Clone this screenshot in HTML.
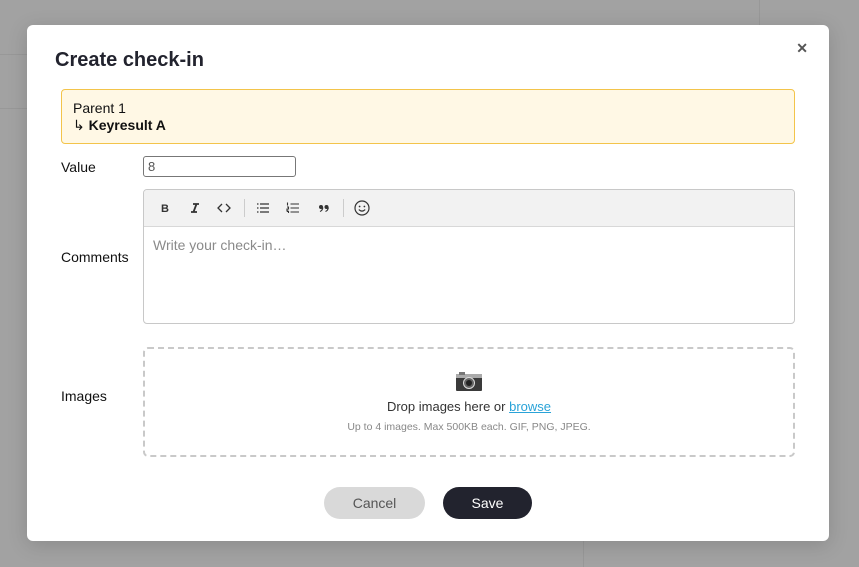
<!DOCTYPE html>
<html><head><style>
*{box-sizing:border-box;margin:0;padding:0}
body{width:859px;height:567px;background:#a2a2a2;font-family:"Liberation Sans",sans-serif;position:relative;overflow:hidden;color:#111}
.ln{position:absolute;background:#989898}
.modal{position:absolute;left:27px;top:25px;width:802px;height:516px;background:#fff;border-radius:6px;box-shadow:0 4px 20px rgba(0,0,0,.15)}
h1{position:absolute;left:28px;top:24px;font-size:20px;font-weight:bold;color:#22232e}
.x{position:absolute;right:21px;top:15px;font-size:14px;color:#555;font-weight:bold}
.crumb{position:absolute;left:34px;top:64px;width:734px;height:55px;background:#fff8e5;border:1px solid #f3c44a;border-radius:4px;padding:10px 11px;font-size:14px;line-height:17px}
.lab{position:absolute;left:34px;font-size:14px}
.val{position:absolute;left:116px;top:131px;width:153px;height:21px;border:1px solid #777;border-radius:3px;font-size:13px;padding:2px 4px;color:#555}
.ed{position:absolute;left:116px;top:164px;width:652px;height:135px;border:1px solid #c8c8c8;border-radius:4px;overflow:hidden}
.tb{height:37px;background:#f2f2f2;border-bottom:1px solid #d8d8d8;position:relative;font-size:12px;color:#333}
.tb svg{position:absolute;top:11px}
.sep{position:absolute;top:9px;width:1px;height:18px;background:#ccc}
.ph{padding:10px 9px;font-size:14px;color:#8a8a8a}
.drop{position:absolute;left:116px;top:322px;width:652px;height:110px;border:2px dashed #c9c9c9;border-radius:5px;text-align:center}
.btn{position:absolute;top:462px;height:32px;border-radius:16px;font-size:14px;line-height:32px;text-align:center}
</style></head><body>
<div class="ln" style="left:0;top:54px;width:27px;height:1px"></div>
<div class="ln" style="left:0;top:108px;width:27px;height:1px"></div>
<div class="ln" style="left:759px;top:0;width:1px;height:25px"></div>
<div class="ln" style="left:583px;top:541px;width:1px;height:26px"></div>
<div class="modal">
<h1>Create check-in</h1>
<div class="x">✕</div>
<div class="crumb">Parent 1<br>↳ <b>Keyresult A</b></div>
<div class="lab" style="top:134px">Value</div>
<div class="val">8</div>
<div class="lab" style="top:224px">Comments</div>
<div class="ed"><div class="tb">
<svg style="left:15px" width="14" height="14" viewBox="0 0 14 14"><text x="2" y="11" font-family="Liberation Sans" font-weight="bold" font-size="11" fill="#333">B</text></svg>
<svg style="left:44px" width="14" height="14" viewBox="0 0 14 14"><path d="M5 3H11M3 11H9M8.5 3L5.5 11" stroke="#333" stroke-width="1.8" fill="none"/></svg>
<svg style="left:72px" width="16" height="14" viewBox="0 0 16 14"><path d="M6 3L2 7L6 11M10 3L14 7L10 11" stroke="#333" stroke-width="1.3" fill="none"/></svg>
<div class="sep" style="left:100px"></div>
<svg style="left:112px" width="14" height="14" viewBox="0 0 14 14"><path d="M4 3H13M4 7H13M4 11H13M1 3H2.5M1 7H2.5M1 11H2.5" stroke="#333" stroke-width="1.3"/></svg>
<svg style="left:142px" width="14" height="14" viewBox="0 0 14 14"><path d="M4.5 3H13M4.5 7H13M4.5 11H13M1.5 1.5V4.5M1 6H2.5V8H1V10H2.5M1 10.5H2.5V12" stroke="#333" stroke-width="1.1" fill="none"/></svg>
<svg style="left:173px" width="14" height="14" viewBox="0 0 14 14"><circle cx="4" cy="6" r="2" fill="#333"/><circle cx="9.5" cy="6" r="2" fill="#333"/><path d="M5.8 6.5Q5.5 9.5 3 10.5M11.3 6.5Q11 9.5 8.5 10.5" stroke="#333" stroke-width="1.2" fill="none"/></svg>
<div class="sep" style="left:199px"></div>
<svg style="left:210px;top:10px" width="16" height="16" viewBox="0 0 16 16"><circle cx="8" cy="8" r="7" fill="none" stroke="#333" stroke-width="1.2"/><circle cx="5.6" cy="6.5" r=".9" fill="#333"/><circle cx="10.4" cy="6.5" r=".9" fill="#333"/><path d="M4.8 9.6Q8 12.6 11.2 9.6" fill="none" stroke="#333" stroke-width="1.2"/></svg>
</div><div class="ph">Write your check-in…</div></div>
<div class="lab" style="top:363px">Images</div>
<div class="drop">
<svg style="margin-top:22px" width="26" height="20" viewBox="0 0 26 20"><rect x="0" y="3" width="26" height="17" rx="1" fill="#3a3a3a"/><rect x="0" y="3" width="26" height="4" fill="#aaa"/><rect x="3" y="1" width="6" height="3" fill="#777"/><circle cx="13" cy="12" r="5.5" fill="#666" stroke="#ddd" stroke-width="1"/><circle cx="13" cy="12" r="3" fill="#222"/></svg>
<div style="font-size:13px;color:#333;margin-top:3px">Drop images here or <span style="color:#2aa3d8;text-decoration:underline">browse</span></div>
<div style="font-size:10.5px;color:#888;margin-top:7px">Up to 4 images. Max 500KB each. GIF, PNG, JPEG.</div>
</div>
<div class="btn" style="left:297px;width:101px;background:#d9d9d9;color:#555">Cancel</div>
<div class="btn" style="left:416px;width:89px;background:#22232e;color:#fff">Save</div>
</div>
</body></html>
